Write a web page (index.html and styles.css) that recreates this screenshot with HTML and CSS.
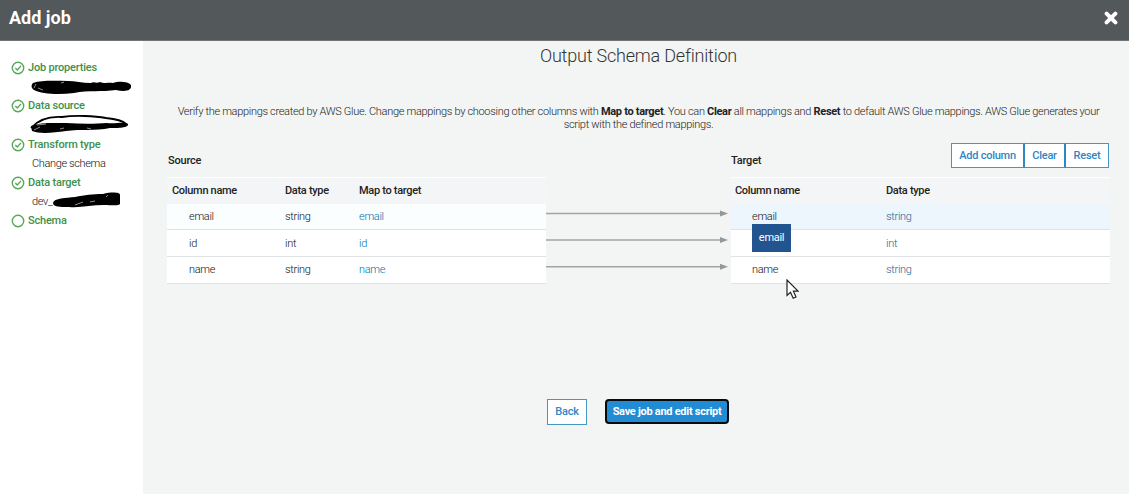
FILE: index.html
```html
<!DOCTYPE html>
<html lang="en">
<head>
<meta charset="utf-8">
<title>Add job</title>
<link rel="stylesheet" href="styles.css">
</head>
<body>
<header class="topbar">
  <h1 class="topbar-title">Add job</h1>
  <svg class="close" width="14" height="14" viewBox="0 0 14 14"><path d="M2.600 2.600L11.400 11.400M11.400 2.600L2.600 11.400"/></svg>
</header>
<div class="layout">
  <nav class="steps">
    <div class="step">
      <svg class="step-icon" width="14" height="14" viewBox="0 0 14 14"><circle cx="7" cy="7" r="5.700"/><path d="M4.300 7.100L6.300 9L10 4.900"/></svg>
      <div class="step-body"><div class="step-title">Job properties</div>
        <svg class="scribble" width="102" height="19" viewBox="0 0 102 19"><path class="ink" d="M3 6C12 3 25 4 38 4C45 4 52 6 61 6C64 4 66 7 70 5C75 7 79 5 83 6C88 4 98 4 101 8C102 14 95 15 86 13C72 15 59 13 44 16C28 18 12 17 4 13C1 11 1 8 3 6Z"/><path class="gap" d="M4 11L6 7M8 11L13 13M31 6L34 5"/></svg></div>
    </div>
    <div class="step">
      <svg class="step-icon" width="14" height="14" viewBox="0 0 14 14"><circle cx="7" cy="7" r="5.700"/><path d="M4.300 7.100L6.300 9L10 4.900"/></svg>
      <div class="step-body"><div class="step-title">Data source</div>
        <svg class="scribble" width="102" height="19" viewBox="0 0 102 19"><path class="ink" d="M1 11C10 7 24 8 36 8C51 9 65 9 77 8C85 9 96 6 98 9C99 13 88 13 80 13C65 16 51 14 36 16C23 18 9 19 2 16Z"/><path class="loop" d="M1 13C8 5 17 1 32 2C45 0 65 1 76 3C86 4 93 6 96 9"/><path class="gap" d="M4 15L10 12M7 10L16 9M30 14L34 13M57 13L61 14"/></svg></div>
    </div>
    <div class="step">
      <svg class="step-icon" width="14" height="14" viewBox="0 0 14 14"><circle cx="7" cy="7" r="5.700"/><path d="M4.300 7.100L6.300 9L10 4.900"/></svg>
      <div class="step-body"><div class="step-title">Transform type</div><div class="step-sub wide">Change schema</div></div>
    </div>
    <div class="step">
      <svg class="step-icon" width="14" height="14" viewBox="0 0 14 14"><circle cx="7" cy="7" r="5.700"/><path d="M4.300 7.100L6.300 9L10 4.900"/></svg>
      <div class="step-body"><div class="step-title">Data target</div>
        <div class="step-sub">dev_<svg class="target-scribble" width="70" height="19" viewBox="0 0 70 19"><path class="ink" d="M1 12C2 7 14 7 23 6C33 4 40 3 51 3C59 1 68 1 68 4V13C67 15 60 14 52 14C39 14 29 17 17 16C8 16 1 16 1 12Z"/><path class="gap" d="M23 14L31 11M54 6L56 4M38 11L43 10"/></svg></div></div>
    </div>
    <div class="step">
      <svg class="step-icon" width="14" height="14" viewBox="0 0 14 14"><circle cx="7" cy="7" r="5.700"/></svg>
      <div class="step-body"><div class="step-title">Schema</div></div>
    </div>
  </nav>
  <main class="content">
    <h2 class="title"><span>Output Schema Definition</span></h2>
    <p class="intro"><span>Verify the mappings created by AWS Glue. Change mappings by choosing other columns with <b>Map to target</b>. You can <b>Clear</b> all mappings and <b>Reset</b> to default AWS Glue mappings. AWS Glue generates your</span><br><span>script with the defined mappings.</span></p>
    <div class="mapping">
      <section class="panel">
        <div class="panel-head"><h3>Source</h3></div>
        <div class="row head source"><span>Column name</span><span>Data type</span><span>Map to target</span></div>
        <div class="row source tint"><span class="name">email</span><span>string</span><a>email</a></div>
        <div class="row source"><span class="name">id</span><span>int</span><a>id</a></div>
        <div class="row source"><span class="name">name</span><span>string</span><a>name</a></div>
      </section>
      <svg class="arrows" width="185" height="80" viewBox="0 0 185 80">
        <path class="shaft" d="M0 10.500H176M0 37H176M0 63.700H176"/>
        <path class="tip" d="M174 7.500L182 10.500L174 13.500ZM174 34L182 37L174 40ZM174 60.700L182 63.700L174 66.700Z"/>
      </svg>
      <section class="panel">
        <div class="panel-head"><h3 class="target-title">Target</h3>
          <div class="actions"><button>Add column</button><button>Clear</button><button>Reset</button></div></div>
        <div class="row head target"><span>Column name</span><span>Data type</span></div>
        <div class="row target active"><span class="name">email<span class="tooltip">email</span></span><a>string</a></div>
        <div class="row target"><span class="name"></span><a>int</a></div>
        <div class="row target"><span class="name">name<svg class="cursor" width="13" height="21" viewBox="0 0 13 21"><path d="M1 1V16.500L4.500 13.300L7.200 19.200L10 18L7.400 12.200H12Z"/></svg></span><a>string</a></div>
      </section>
    </div>
    <footer class="buttons"><button class="back">Back</button><button class="save">Save job and edit script</button></footer>
  </main>
</div>
</body>
</html>
```
FILE: styles.css
```css
* { box-sizing: border-box; }
body { margin: 0; height: 494px; overflow: hidden; background: #f3f5f5; color: #111; font: 300 11px/13px Roboto, sans-serif; letter-spacing: -.31px; }
h1, h2, h3, p { margin: 0; }
button { font: 500 11px/13px Roboto, sans-serif; letter-spacing: -.25px; color: #2f86c4; background: #fff; border: 1px solid #4596c5; padding: 0; }
.topbar { height: 41px; display: flex; justify-content: space-between; padding: 0 11px 0 9px; background: #53585b; border-bottom: 1px solid #717476; }
.topbar-title { color: #fff; font-size: 18px; line-height: 35px; font-weight: 700; letter-spacing: 0; }
.close { margin-top: 11px; }
.close path { stroke: #fff; stroke-width: 4; stroke-linecap: round; }
.layout { display: flex; height: 453px; }
.steps { width: 143px; background: #fff; padding: 20px 0 0 11px; }
.step { display: flex; height: 38.3px; }
.step-icon { flex: none; fill: none; stroke: #55a956; stroke-width: 1.4; }
.step-body { padding-left: 3px; }
.step-title { color: #3d914b; font-weight: 500; height: 16px; line-height: 13px; white-space: nowrap; letter-spacing: -.2px; }
.step-sub { display: flex; height: 19px; padding: 3px 0 0 4px; line-height: 13px; white-space: nowrap; }
.wide { letter-spacing: -.36px; }
.scribble { display: block; margin-left: 2px; }
.target-scribble { flex: none; margin: -4px 0 0 -1px; }
.ink { fill: #000; }
.loop { fill: none; stroke: #000; stroke-width: 1.8; }
.gap { fill: none; stroke: #ccc; stroke-width: .7; }
.content { flex: 1; min-width: 0; padding: 0 19px 0 24px; }
.title { height: 64px; padding-top: 5px; text-align: center; color: #333; font-size: 18px; line-height: 20px; font-weight: 300; letter-spacing: -.2px; }
.intro { height: 38px; text-align: center; white-space: nowrap; color: #222; }
.intro b { color: #222; font-weight: 700; }
.mapping { display: flex; }
.panel { width: 379px; }
.panel-head { height: 34px; display: flex; justify-content: space-between; }
.panel h3 { font-size: 11px; line-height: 13px; font-weight: 500; color: #222; padding: 11px 0 0 1px; letter-spacing: -.2px; }
.panel .target-title { padding-left: 0; }
.row { display: grid; align-items: center; height: 26.7px; background: #fff; border-bottom: 1px solid #dfe3e6; }
.source { grid-template-columns: 113px 74px 1fr; padding-left: 5px; }
.target { grid-template-columns: 151px 1fr; padding-left: 4px; }
.head { background: #f4f5f6; border-top: 1px solid #fff; border-bottom: 0; font-weight: 500; color: #222; }
.row a { color: #0070aa; }
.target a { color: #1a6598; }
.name { position: relative; padding-left: 17px; }
.tint { background: #fafeff; }
.active { background: #edf5fd; }
.arrows { flex: none; margin-top: 60px; }
.shaft { stroke: #a2a5a5; stroke-width: 1.6; }
.tip { fill: #959898; }
.actions { display: flex; margin-right: 1px; height: 25px; }
.actions button { width: 43px; border-left: 0; }
.actions button:first-child { width: 74px; border-left: 1px solid #4596c5; }
.actions button:nth-child(2) { width: 41px; }
.actions button:not(:last-child) { border-right: 2px solid #2f86c4; }
.tooltip { position: absolute; left: 17px; top: 14px; width: 39px; height: 28px; z-index: 2; background: #22558f; color: #fff; text-align: center; line-height: 28px; font-weight: 400; }
.cursor { position: absolute; left: 51px; top: 16px; fill: #fff; stroke: #222; stroke-width: 1.2; }
.buttons { display: flex; gap: 18px; padding: 115px 0 0 380px; }
.back { width: 40px; height: 26px; padding-bottom: 1px; }
.save { width: 124px; height: 25px; border: 2px solid #080b0e; border-radius: 4px; background: #218bd3; color: #fff; font-weight: 700; letter-spacing: -.28px; white-space: nowrap; }
```
